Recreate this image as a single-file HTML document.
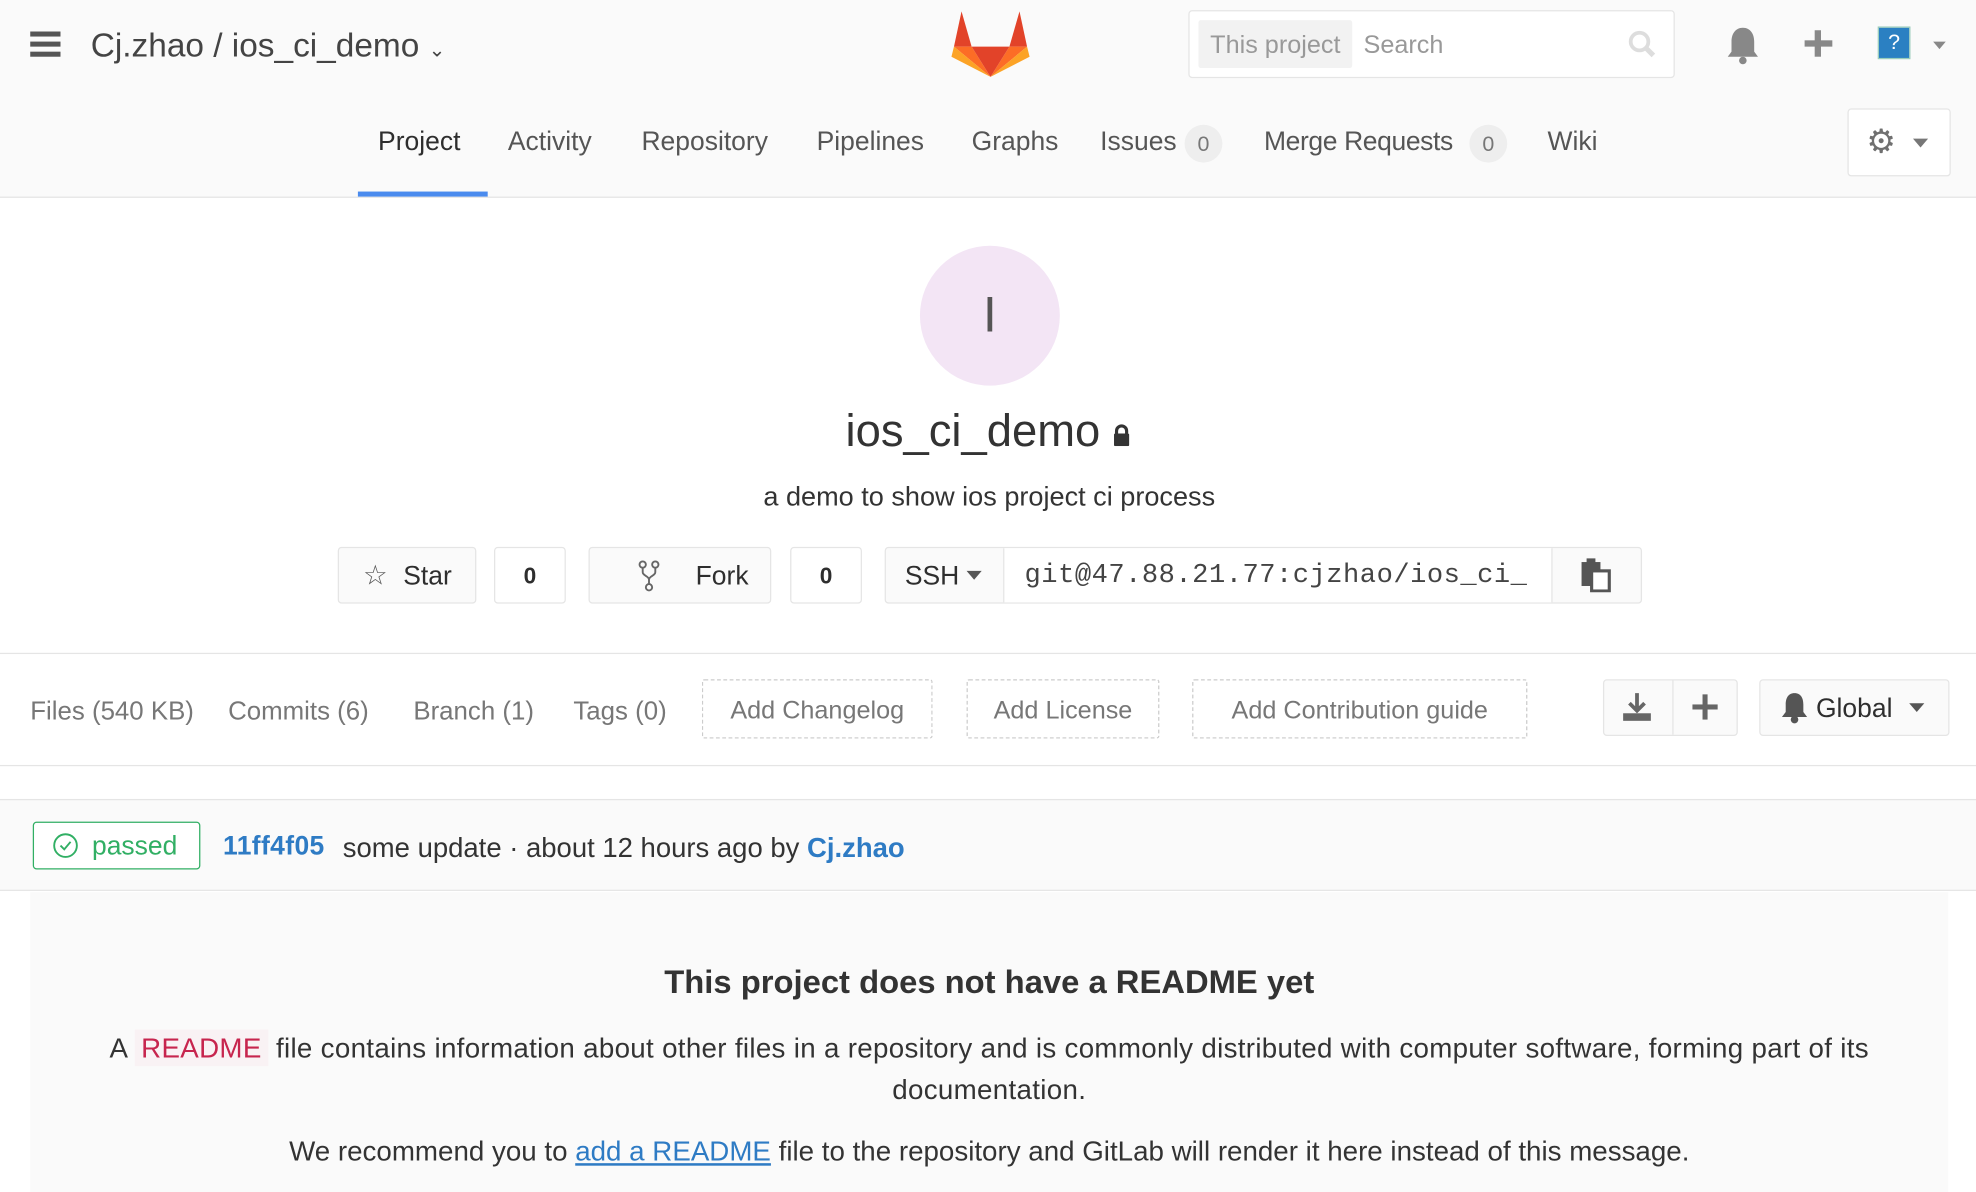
<!DOCTYPE html>
<html><head><meta charset="utf-8"><style>
html,body{margin:0;padding:0;background:#fff;overflow:hidden}
body{width:1976px;height:1192px}
#w{position:absolute;left:0;top:0;width:1568px;height:946px;transform:scale(1.26020);transform-origin:0 0;font-family:"Liberation Sans",sans-serif;color:#2e2e2e}
.a{position:absolute;white-space:nowrap}
.hdr{position:absolute;left:0;top:0;width:1568px;height:156px;background:#fafafa;border-bottom:1px solid #e5e5e5}
.nav{font-size:21px;color:#555;top:101px}
.badge{position:absolute;top:99px;width:30px;height:30px;border-radius:15px;background:#eee;color:#777;font-size:17px;text-align:center;line-height:32px}
.btn{position:absolute;border:1px solid #e5e5e5;border-radius:3px;background:#fafafa;box-sizing:border-box}
.cnt{position:absolute;border:1px solid #e5e5e5;border-radius:3px;background:#fff;box-sizing:border-box;font-size:18px;font-weight:bold;text-align:center;line-height:44px}
.lnk{font-size:20.5px;color:#777;top:553px}
.dash{position:absolute;top:539px;height:47px;border:1px dashed #ccc;box-sizing:border-box;font-size:20px;color:#777;text-align:center;line-height:49px;border-radius:2px}
</style></head><body><div id="w">
<div class="hdr"></div>
<div class="a" style="left:24px;top:25px;width:24px;height:4px;background:#555;box-shadow:0 8px 0 #555,0 16px 0 #555"></div>
<div class="a" style="left:72px;top:21px;font-size:26.5px;color:#444">Cj.zhao / ios_ci_demo <span style="font-size:16px">&#8964;</span></div>
<svg class="a" style="left:755px;top:7px" width="62" height="56" viewBox="0 0 62 56"><polygon points="2,30 8,2 16,30" fill="#e24329"/><polygon points="46,30 54,2 60,30" fill="#e24329"/><polygon points="2,30 31,54 16,30" fill="#fc6d26"/><polygon points="60,30 31,54 46,30" fill="#fc6d26"/><polygon points="16,30 46,30 31,54" fill="#e24329"/><polygon points="2,30 0,38 31,54" fill="#fca326"/><polygon points="60,30 62,38 31,54" fill="#fca326"/></svg>
<div class="a" style="left:943px;top:8px;width:386px;height:54px;border:1px solid #e5e5e5;border-radius:3px;background:#fff;box-sizing:border-box"></div>
<div class="a" style="left:951px;top:16px;width:122px;height:38px;background:#f2f2f2;border-radius:2px;font-size:20px;color:#999;line-height:40px;text-align:center">This project</div>
<div class="a" style="left:1082px;top:25px;font-size:20px;color:#999">Search</div>
<svg class="a" style="left:1290px;top:22px" width="26" height="26"><circle cx="11" cy="11" r="7" fill="none" stroke="#ddd" stroke-width="3"/><path d="M16 16l6 6" stroke="#ddd" stroke-width="4"/></svg>
<svg class="a" style="left:1369px;top:20px" width="28" height="32"><path d="M14 2c-6 0-9 5-9 11v8l-3 4h24l-3-4v-8c0-6-3-11-9-11z" fill="#888"/><circle cx="14" cy="28" r="3" fill="#888"/></svg>
<div class="a" style="left:1432px;top:32px;width:22px;height:5px;background:#888"></div><div class="a" style="left:1440px;top:24px;width:5px;height:21px;background:#888"></div>
<div class="a" style="left:1491px;top:22px;width:24px;height:24px;background:#2b80c2;outline:1px solid #9cb;color:#fff;text-align:center;font-size:17px;line-height:24px">?</div>
<div class="a" style="left:1534px;top:33px;border:5px solid transparent;border-top:6px solid #888"></div>
<div class="a nav" style="left:300px;color:#2e2e2e">Project</div>
<div class="a" style="left:284px;top:152px;width:103px;height:4px;background:#4a8bee"></div>
<div class="a nav" style="left:403px">Activity</div>
<div class="a nav" style="left:509px">Repository</div>
<div class="a nav" style="left:648px">Pipelines</div>
<div class="a nav" style="left:771px">Graphs</div>
<div class="a nav" style="left:873px">Issues</div><div class="badge" style="left:940px">0</div>
<div class="a nav" style="left:1003px;letter-spacing:-0.3px">Merge Requests</div><div class="badge" style="left:1166px">0</div>
<div class="a nav" style="left:1228px">Wiki</div>
<div class="btn" style="left:1466px;top:86px;width:82px;height:54px;background:#fff"></div>
<div class="a" style="left:1481px;top:97px;font-size:26px;color:#707070">&#9881;</div>
<div class="a" style="left:1518px;top:110px;border:6px solid transparent;border-top:7px solid #777"></div>
<div class="a" style="left:730px;top:195px;width:111px;height:111px;border-radius:50%;background:#f3e5f5;text-align:center;line-height:111px;font-size:40px;color:#555">I</div>
<div class="a" style="left:0;width:1568px;top:321px;text-align:center;font-size:36px;color:#333">ios_ci_demo <svg width="14" height="18" viewBox="0 0 14 18"><path d="M3 8V6a4 4 0 0 1 8 0v2" fill="none" stroke="#333" stroke-width="2.5"/><rect x="1" y="8" width="12" height="10" rx="1" fill="#333"/></svg></div>
<div class="a" style="left:0;width:1570px;top:382px;text-align:center;font-size:21.5px;color:#333">a demo to show ios project ci process</div>
<div class="btn" style="left:268px;top:434px;width:110px;height:45px"></div>
<div class="a" style="left:288px;top:444px;font-size:22px;color:#555">&#9734;</div><div class="a" style="left:320px;top:446px;font-size:21px">Star</div>
<div class="cnt" style="left:392px;top:434px;width:57px;height:45px">0</div>
<div class="btn" style="left:467px;top:434px;width:145px;height:45px"></div>
<svg class="a" style="left:505px;top:444px" width="20" height="26"><circle cx="5" cy="4" r="2.5" fill="none" stroke="#666" stroke-width="1.5"/><circle cx="15" cy="4" r="2.5" fill="none" stroke="#666" stroke-width="1.5"/><circle cx="10" cy="22" r="2.5" fill="none" stroke="#666" stroke-width="1.5"/><path d="M5 7v3c0 3 5 3 5 6v3M15 7v3c0 3-5 3-5 6" fill="none" stroke="#666" stroke-width="1.5"/></svg>
<div class="a" style="left:552px;top:446px;font-size:21px">Fork</div>
<div class="cnt" style="left:627px;top:434px;width:57px;height:45px">0</div>
<div class="btn" style="left:702px;top:434px;width:601px;height:45px"></div>
<div class="a" style="left:796px;top:435px;width:434px;height:43px;background:#fff;border-left:1px solid #e5e5e5;border-right:1px solid #e5e5e5"></div>
<div class="a" style="left:718px;top:446px;font-size:21px">SSH</div>
<div class="a" style="left:767px;top:453px;border:6px solid transparent;border-top:7px solid #555"></div>
<div class="a" style="left:813px;top:445px;font-size:21.5px;font-family:'Liberation Mono',monospace;color:#444;letter-spacing:0.4px">git@47.88.21.77:cjzhao/ios_ci_</div>
<svg class="a" style="left:1254px;top:443px" width="26" height="27"><rect x="1" y="3" width="15" height="19" fill="#555"/><rect x="5" y="0" width="7" height="5" fill="#555"/><rect x="9" y="10" width="14" height="16" fill="#fff" stroke="#555" stroke-width="2.5"/></svg>
<div class="a" style="left:0;top:518px;width:1568px;height:1px;background:#e5e5e5"></div>
<div class="a lnk" style="left:24px">Files (540 KB)</div>
<div class="a lnk" style="left:181px">Commits (6)</div>
<div class="a lnk" style="left:328px">Branch (1)</div>
<div class="a lnk" style="left:455px">Tags (0)</div>
<div class="dash" style="left:557px;width:183px">Add Changelog</div>
<div class="dash" style="left:767px;width:153px">Add License</div>
<div class="dash" style="left:946px;width:266px">Add Contribution guide</div>
<div class="btn" style="left:1272px;top:539px;width:107px;height:45px"></div>
<div class="a" style="left:1327px;top:540px;width:1px;height:43px;background:#e5e5e5"></div>
<svg class="a" style="left:1287px;top:549px" width="24" height="24"><path d="M12 1v13M6 9l6 6 6-6" stroke="#666" stroke-width="3" fill="none"/><rect x="1" y="17" width="22" height="6" fill="#666"/></svg>
<div class="a" style="left:1343px;top:559px;width:20px;height:4px;background:#666"></div><div class="a" style="left:1351px;top:551px;width:4px;height:20px;background:#666"></div>
<div class="btn" style="left:1396px;top:539px;width:151px;height:45px"></div>
<svg class="a" style="left:1413px;top:549px" width="22" height="26"><path d="M11 1c-5 0-7 4-7 9v6l-3 4h20l-3-4v-6c0-5-2-9-7-9z" fill="#555"/><circle cx="11" cy="22" r="3" fill="#555"/></svg>
<div class="a" style="left:1441px;top:551px;font-size:21px">Global</div>
<div class="a" style="left:1515px;top:558px;border:6px solid transparent;border-top:7px solid #555"></div>
<div class="a" style="left:0;top:607px;width:1568px;height:1px;background:#e5e5e5"></div>
<div class="a" style="left:0;top:634px;width:1568px;height:73px;background:#fafafa;border-top:1px solid #e5e5e5;border-bottom:1px solid #e5e5e5;box-sizing:border-box"></div>
<div class="a" style="left:26px;top:652px;width:133px;height:38px;border:1px solid #31af64;border-radius:3px;box-sizing:border-box;background:#fff"></div>
<svg class="a" style="left:41px;top:660px" width="22" height="22"><circle cx="11" cy="11" r="9" fill="none" stroke="#31af64" stroke-width="1.5"/><path d="M7 11l3 3 5-6" fill="none" stroke="#31af64" stroke-width="1.5"/></svg>
<div class="a" style="left:73px;top:660px;font-size:21px;color:#31af64">passed</div>
<div class="a" style="left:177px;top:660px;font-size:21px;color:#2e7bc4;font-weight:bold;letter-spacing:0.3px">11ff4f05</div>
<div class="a" style="left:272px;top:660px;font-size:21.8px;color:#333">some update · about 12 hours ago by <b style="color:#2e7bc4">Cj.zhao</b></div>
<div class="a" style="left:24px;top:708px;width:1522px;height:238px;background:#fafafa"></div>
<div class="a" style="left:0;width:1570px;top:764px;text-align:center;font-size:26px;font-weight:bold;color:#333">This project does not have a README yet</div>
<div class="a" style="left:0;width:1570px;top:815px;text-align:center;font-size:22px;letter-spacing:0.25px;line-height:33px;color:#333">A <span style="color:#c7254e;background:#f9f2f4;padding:2px 5px">README</span> file contains information about other files in a repository and is commonly distributed with computer software, forming part of its<br>documentation.</div>
<div class="a" style="left:0;width:1570px;top:901px;text-align:center;font-size:22px;letter-spacing:0;color:#333">We recommend you to <span style="color:#2e7bc4;text-decoration:underline">add a README</span> file to the repository and GitLab will render it here instead of this message.</div>
</div></body></html>
